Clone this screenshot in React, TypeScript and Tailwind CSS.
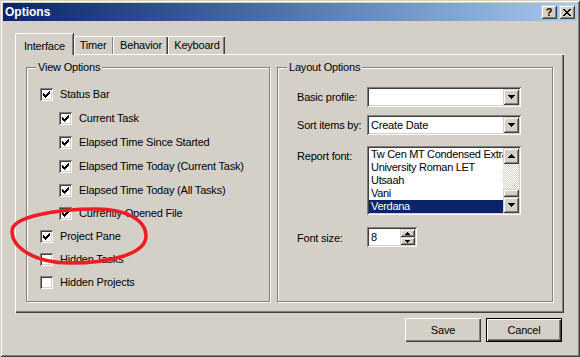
const viewRows = [
  { label: "Status Bar", checked: true, nested: false, gap: "" },
  { label: "Current Task", checked: true, nested: true, gap: "mt-[11px]" },
  { label: "Elapsed Time Since Started", checked: true, nested: true, gap: "mt-[11px]" },
  { label: "Elapsed Time Today (Current Task)", checked: true, nested: true, gap: "mt-[11px]" },
  { label: "Elapsed Time Today (All Tasks)", checked: true, nested: true, gap: "mt-[11px]" },
  { label: "Currently Opened File", checked: true, nested: true, gap: "mt-[10px]" },
  { label: "Project Pane", checked: true, nested: false, gap: "mt-[10px]" },
  { label: "Hidden Tasks", checked: false, nested: false, gap: "mt-[10px]" },
  { label: "Hidden Projects", checked: false, nested: false, gap: "mt-[10px]" },
];

const fonts = ["Tw Cen MT Condensed Extra Bold", "University Roman LET", "Utsaah", "Vani", "Verdana"];

function Check() {
  // classic 7x7 win2k checkmark
  const cols = [2, 3, 4, 3, 2, 1, 0];
  return (
    <svg width="7" height="7" viewBox="0 0 7 7" shapeRendering="crispEdges">
      {cols.map((y, x) => (
        <rect key={x} x={x} y={y} width="1" height="3" fill="#000" />
      ))}
    </svg>
  );
}

function Checkbox({ checked }: { checked: boolean }) {
  return (
    <div className="w-[13px] h-[13px] shrink-0 bg-white flex items-center justify-center shadow-[inset_1px_1px_#808080,inset_-1px_-1px_#fff,inset_2px_2px_#404040,inset_-2px_-2px_#d4d0c8]">
      {checked && <Check />}
    </div>
  );
}

function Arrow({ up = false, small = false }: { up?: boolean; small?: boolean }) {
  if (small) {
    return (
      <svg width="5" height="3" viewBox="0 0 5 3" shapeRendering="crispEdges">
        {up ? <path d="M2 0h1v1h1v1h1v1H0V2h1V1h1z" fill="#000" /> : <path d="M0 0h5v1H4v1H3v1H2V2H1V1H0z" fill="#000" />}
      </svg>
    );
  }
  return (
    <svg width="7" height="4" viewBox="0 0 7 4" shapeRendering="crispEdges">
      {up ? (
        <path d="M3 0h1v1h1v1h1v1h1v1H0V3h1V2h1V1h1z" fill="#000" />
      ) : (
        <path d="M0 0h7v1H6v1H5v1H4v1H3V3H2V2H1V1H0z" fill="#000" />
      )}
    </svg>
  );
}

function SmallButton({ children, className = "" }: { children?: React.ReactNode; className?: string }) {
  return (
    <div
      className={
        "bg-[#d4d0c8] flex items-center justify-center shadow-[inset_1px_1px_#d4d0c8,inset_-1px_-1px_#404040,inset_2px_2px_#fff,inset_-2px_-2px_#808080] " +
        className
      }
    >
      {children}
    </div>
  );
}

function Combo({ value }: { value?: string }) {
  return (
    <div className="w-[154px] h-[20px] bg-white flex items-center p-[2px] shadow-[inset_1px_1px_#808080,inset_-1px_-1px_#fff,inset_2px_2px_#404040,inset_-2px_-2px_#d4d0c8]">
      <span className="flex-1 pl-[2px] text-[11px] leading-none">{value}</span>
      <SmallButton className="w-[16px] h-[16px]">
        <Arrow />
      </SmallButton>
    </div>
  );
}

export default function App() {
  return (
    <div className="relative w-[580px] h-[357px] bg-[#d4d0c8] p-[3px] overflow-hidden text-black text-[11px] tracking-[-0.2px] font-['Liberation_Sans',Arial,sans-serif] shadow-[inset_1px_1px_#d4d0c8,inset_-1px_-1px_#404040,inset_2px_2px_#fff,inset_-2px_-2px_#808080]">
      {/* title bar */}
      <div className="h-[18px] flex items-center pl-[2px] pr-[2px] bg-gradient-to-r from-[#0a246a] to-[#a6caf0]">
        <span className="text-white font-bold text-[12px] tracking-normal">Options</span>
        <div className="ml-auto flex gap-[2px]">
          <SmallButton className="w-[16px] h-[14px]">
            <span className="font-bold text-[11px] leading-none tracking-normal">?</span>
          </SmallButton>
          <SmallButton className="w-[16px] h-[14px]">
            <svg width="8" height="7" viewBox="0 0 8 7" shapeRendering="crispEdges">
              <path d="M0 0h2v1h1v1h2V1h1V0h2v1H7v1H6v1H5v1h1v1h1v1h1v1H6V6H5V5H3v1H2v1H0V6h1V5h1V4h1V3H2V2H1V1H0z" fill="#000" />
            </svg>
          </SmallButton>
        </div>
      </div>

      <div className="pl-[12px] pt-[12px]">
        {/* tabs */}
        <div className="flex items-end h-[21px]">
          <div className="relative z-10 translate-y-[1px] w-[58px] h-[22px] bg-[#d4d0c8] rounded-tl-[2px] border-t border-l border-white shadow-[inset_-1px_0_#808080,1px_0_#404040] flex items-start justify-center pt-[4px]">
            Interface
          </div>
          <div className="w-[39px] h-[18px] ml-[1px] rounded-tl-[2px] border-t border-l border-white shadow-[inset_-1px_0_#808080,inset_-2px_0_#d4d0c8] flex items-center justify-center pr-[2px]">
            Timer
          </div>
          <div className="w-[55px] h-[18px] rounded-tl-[2px] border-t border-l border-white shadow-[inset_-1px_0_#404040,inset_-2px_0_#808080] flex items-center justify-center">
            Behavior
          </div>
          <div className="w-[57px] h-[18px] rounded-tl-[2px] border-t border-l border-white shadow-[inset_-1px_0_#404040,inset_-2px_0_#808080] flex items-center justify-center">
            Keyboard
          </div>
        </div>

        {/* panel */}
        <div className="w-[549px] h-[259px] flex gap-[7px] pl-[11px] pt-[13px] shadow-[inset_1px_1px_#fff,inset_-1px_-1px_#404040,inset_-2px_-2px_#808080]">
          {/* view options */}
          <div className="relative w-[244px] h-[235px] border border-[#808080] shadow-[inset_1px_1px_#fff,1px_1px_#fff] pl-[13px] pt-[20px]">
            <span className="absolute -top-[7px] left-[9px] px-[2px] bg-[#d4d0c8] leading-[13px]">View Options</span>
            <div className="flex flex-col">
              {viewRows.map((r) => (
                <div key={r.label} className={"flex items-center h-[13px] gap-[7px] " + r.gap + (r.nested ? " pl-[19px]" : "")}>
                  <Checkbox checked={r.checked} />
                  <span className="leading-none">{r.label}</span>
                </div>
              ))}
            </div>
          </div>

          {/* layout options */}
          <div className="relative w-[276px] h-[235px] border border-[#808080] shadow-[inset_1px_1px_#fff,1px_1px_#fff] pl-[19px] pt-[19px]">
            <span className="absolute -top-[7px] left-[9px] px-[2px] bg-[#d4d0c8] leading-[13px]">Layout Options</span>
            <div className="flex items-center">
              <span className="w-[70px]">Basic profile:</span>
              <Combo />
            </div>
            <div className="flex items-center mt-[8px]">
              <span className="w-[70px]">Sort items by:</span>
              <Combo value="Create Date" />
            </div>
            <div className="flex items-start mt-[11px]">
              <span className="w-[70px] pt-[2px]">Report font:</span>
              <div className="w-[154px] h-[69px] bg-white p-[2px] flex shadow-[inset_1px_1px_#808080,inset_-1px_-1px_#fff,inset_2px_2px_#404040,inset_-2px_-2px_#d4d0c8]">
                <div className="flex-1 overflow-hidden flex flex-col">
                  {fonts.map((f, i) => (
                    <div
                      key={f}
                      className={
                        "h-[13px] leading-[13px] pl-[2px] whitespace-nowrap text-[11px] tracking-[-0.3px] " +
                        (i === fonts.length - 1 ? "bg-[#0a246a] text-white" : "text-black")
                      }
                    >
                      {f}
                    </div>
                  ))}
                </div>
                <div className="w-[16px] flex flex-col">
                  <SmallButton className="w-[16px] h-[16px]">
                    <Arrow up />
                  </SmallButton>
                  <div className="flex-1 flex flex-col justify-end bg-[repeating-conic-gradient(#fff_0%_25%,#d4d0c8_0%_50%)] bg-[length:2px_2px]">
                    <SmallButton className="w-[16px] h-[8px]" />
                  </div>
                  <SmallButton className="w-[16px] h-[16px]">
                    <Arrow />
                  </SmallButton>
                </div>
              </div>
            </div>
            <div className="flex items-start mt-[12px]">
              <span className="w-[70px] pt-[3px]">Font size:</span>
              <div className="w-[50px] h-[20px] bg-white p-[2px] flex items-center shadow-[inset_1px_1px_#808080,inset_-1px_-1px_#fff,inset_2px_2px_#404040,inset_-2px_-2px_#d4d0c8]">
                <span className="flex-1 pl-[2px] text-[11px]">8</span>
                <div className="flex flex-col">
                  <SmallButton className="w-[15px] h-[8px]">
                    <Arrow up small />
                  </SmallButton>
                  <SmallButton className="w-[15px] h-[8px]">
                    <Arrow small />
                  </SmallButton>
                </div>
              </div>
            </div>
          </div>
        </div>

        {/* buttons */}
        <div className="w-[549px] flex justify-end gap-[5px] pr-[2px] mt-[5px]">
          <div className="w-[76px] h-[24px] flex items-center justify-center shadow-[inset_1px_1px_#fff,inset_-1px_-1px_#404040,inset_-2px_-2px_#808080]">
            Save
          </div>
          <div className="w-[76px] h-[24px] flex items-center justify-center shadow-[inset_0_0_0_1px_#000,inset_2px_2px_#fff,inset_-2px_-2px_#404040,inset_-3px_-3px_#808080]">
            Cancel
          </div>
        </div>
      </div>

      {/* red annotation */}
      <svg className="absolute left-0 top-0 pointer-events-none" width="580" height="357">
        <path
          d="M12 231 C12 217 55 209 96 209 C126 209 146 220 146 236 C146 254 110 263 70 263 C35 263 12 248 12 231 Z"
          fill="none"
          stroke="#ee1c24"
          strokeWidth="3.5"
        />
      </svg>
    </div>
  );
}
